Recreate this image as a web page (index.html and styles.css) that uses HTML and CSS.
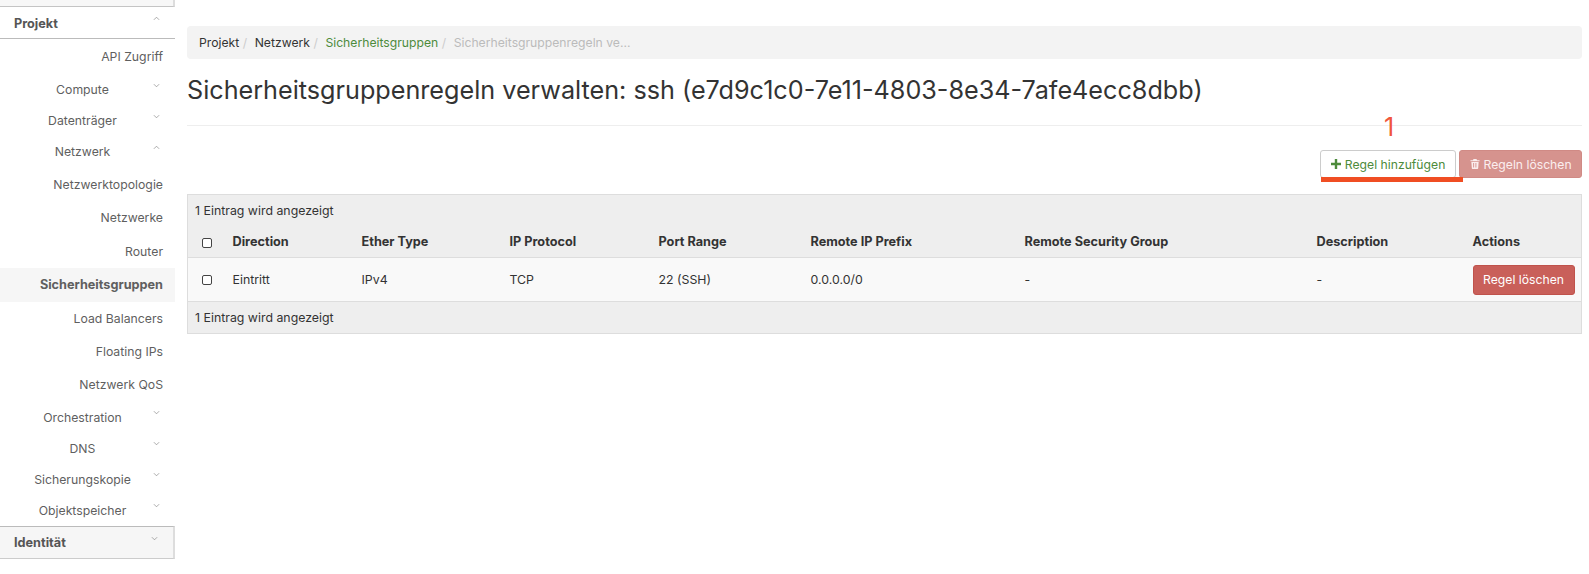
FILE: index.html
```html
<!DOCTYPE html>
<html lang="de">
  <head>
    <meta charset="UTF-8">
    <title>Sicherheitsgruppenregeln verwalten</title>
    <link rel="stylesheet" href="styles.css">
  </head>
  <body>
    <nav class="sidebar">
      <div class="sidebar-top"></div>
      <div class="nav-head open">
        <span>Projekt</span>
        <svg class="chevron" viewBox="0 0 8 5"><path d="M1 4l3-3 3 3"/></svg>
      </div>
      <a class="nav-leaf first">API Zugriff</a>
      <div class="nav-group"><span>Compute</span><svg class="chevron" viewBox="0 0 8 5"><path d="M1 1l3 3 3-3"/></svg></div>
      <div class="nav-group"><span>Datenträger</span><svg class="chevron" viewBox="0 0 8 5"><path d="M1 1l3 3 3-3"/></svg></div>
      <div class="nav-group"><span>Netzwerk</span><svg class="chevron" viewBox="0 0 8 5"><path d="M1 4l3-3 3 3"/></svg></div>
      <div class="nav-sub">
        <a class="nav-leaf">Netzwerktopologie</a>
        <a class="nav-leaf">Netzwerke</a>
        <a class="nav-leaf">Router</a>
        <a class="nav-leaf active">Sicherheitsgruppen</a>
        <a class="nav-leaf">Load Balancers</a>
        <a class="nav-leaf">Floating IPs</a>
        <a class="nav-leaf">Netzwerk QoS</a>
      </div>
      <div class="nav-group"><span>Orchestration</span><svg class="chevron" viewBox="0 0 8 5"><path d="M1 1l3 3 3-3"/></svg></div>
      <div class="nav-group"><span>DNS</span><svg class="chevron" viewBox="0 0 8 5"><path d="M1 1l3 3 3-3"/></svg></div>
      <div class="nav-group"><span>Sicherungskopie</span><svg class="chevron" viewBox="0 0 8 5"><path d="M1 1l3 3 3-3"/></svg></div>
      <div class="nav-group"><span>Objektspeicher</span><svg class="chevron" viewBox="0 0 8 5"><path d="M1 1l3 3 3-3"/></svg></div>
      <div class="nav-head closed">
        <span>Identität</span>
        <svg class="chevron" viewBox="0 0 8 5"><path d="M1 1l3 3 3-3"/></svg>
      </div>
    </nav>

    <main class="content">
      <ol class="breadcrumb">
        <li>Projekt</li>
        <li>Netzwerk</li>
        <li class="crumb-link">Sicherheitsgruppen</li>
        <li class="crumb-current">Sicherheitsgruppenregeln ve...</li>
      </ol>

      <h1>Sicherheitsgruppenregeln verwalten: ssh (e7d9c1c0-7e11-4803-8e34-7afe4ecc8dbb)</h1>

      <div class="actions">
        <span class="step-number">1</span>
        <button type="button" class="btn btn-add">
          <svg class="icon" viewBox="0 0 10 10"><path d="M3.800 0h2.400v3.800H10v2.400H6.200V10H3.800V6.200H0V3.800h3.800z"/></svg>
          Regel hinzufügen
        </button>
        <button type="button" class="btn btn-delete-all">
          <svg class="icon" viewBox="0 0 10 11"><path d="M3.400 0h3.200l.7 1.300H10v1.200H0V1.300h2.700zM1 3.200h8l-.5 7a.8.8 0 0 1-.8.8H2.300a.8.8 0 0 1-.8-.8zm2 1.200v5h1v-5zm2.500 0v5h1v-5z"/></svg>
          Regeln löschen
        </button>
        <span class="step-underline"></span>
      </div>

      <table class="rules">
        <colgroup>
          <col class="col-check">
          <col class="col-direction">
          <col class="col-ether">
          <col class="col-protocol">
          <col class="col-port">
          <col class="col-prefix">
          <col class="col-group">
          <col class="col-description">
          <col class="col-actions">
        </colgroup>
        <thead>
          <tr class="summary"><td colspan="9">1 Eintrag wird angezeigt</td></tr>
          <tr class="columns">
            <th><span class="checkbox head-check"></span></th>
            <th>Direction</th>
            <th>Ether Type</th>
            <th>IP Protocol</th>
            <th>Port Range</th>
            <th>Remote IP Prefix</th>
            <th>Remote Security Group</th>
            <th>Description</th>
            <th>Actions</th>
          </tr>
        </thead>
        <tbody>
          <tr class="row">
            <td><span class="checkbox"></span></td>
            <td>Eintritt</td>
            <td>IPv4</td>
            <td>TCP</td>
            <td>22 (SSH)</td>
            <td>0.0.0.0/0</td>
            <td>-</td>
            <td>-</td>
            <td><button type="button" class="btn btn-delete">Regel löschen</button></td>
          </tr>
        </tbody>
        <tfoot>
          <tr class="summary foot"><td colspan="9">1 Eintrag wird angezeigt</td></tr>
        </tfoot>
      </table>
    </main>
  </body>
</html>
```

FILE: styles.css
```css
* {
  box-sizing: border-box;
}

html,
body {
  height: 100%;
}

body {
  margin: 0;
  display: flex;
  overflow: hidden;
  background-color: #fff;
  color: #333;
  font-family: Inter, "Liberation Sans", sans-serif;
  font-size: 12.35px;
}

/* Sidebar */
.sidebar {
  flex: 0 0 175px;
  color: #5f5f5f;
  font-size: 12.25px;
}

.sidebar-top {
  height: 7px;
  background-color: #f7f7f7;
  border-right: 2px solid #ddd;
  border-bottom: 1px solid #c4c4c4;
}

.nav-head {
  display: flex;
  align-items: center;
  justify-content: space-between;
  padding: 0 14px;
  font-size: 12.7px;
  font-weight: 700;
  color: #555;
}

.nav-head.open {
  height: 32px;
  padding-top: 1px;
  border-bottom: 1px solid #bbb;
}

.nav-head.closed {
  height: 33px;
  padding-top: 1px;
  background-color: #f6f6f6;
  border-top: 1px solid #bbb;
  border-bottom: 1px solid #ccc;
  border-right: 2px solid #ddd;
}

.nav-leaf {
  display: block;
  height: 33.4px;
  line-height: 33.4px;
  padding-right: 12px;
  text-align: right;
}

.nav-leaf.first {
  height: 34px;
  margin-top: 1px;
}

.nav-leaf.active {
  background-color: #f6f6f6;
  font-size: 12.7px;
  font-weight: 700;
}

.nav-sub {
  padding-top: 1px;
}

.nav-group {
  display: flex;
  align-items: center;
  height: 31px;
}

.nav-group span {
  width: 165px;
  text-align: center;
}

.chevron {
  flex: none;
  width: 7px;
  height: 5px;
  margin-top: -9px;
  fill: none;
  stroke: #888;
  stroke-width: 0.8;
}

.nav-group .chevron {
  margin-left: -12px;
}

.nav-head .chevron {
  margin-right: 1px;
}

/* Main column */
.content {
  flex: 1;
  padding: 26px 8px 0 12px;
}

.breadcrumb {
  display: flex;
  height: 33px;
  margin: 0;
  padding: 0 12px;
  align-items: center;
  font-size: 12.2px;
  list-style: none;
  background-color: #f3f3f3;
  border-radius: 4px;
}

.breadcrumb li + li::before {
  content: "/";
  padding: 0 7.5px 0 3.5px;
  color: #ccc;
}

.crumb-link {
  color: #4d8b3c;
}

.crumb-current {
  color: #bbb;
}

h1 {
  height: 67px;
  margin: 0;
  padding-top: 17px;
  border-bottom: 1px solid #eee;
  color: #333;
  font-size: 25.2px;
  font-weight: 400;
  line-height: 29px;
  white-space: nowrap;
}

.actions {
  position: relative;
  display: flex;
  justify-content: flex-end;
  gap: 3px;
  padding-top: 24px;
  margin-bottom: 16px;
}

.btn {
  display: inline-flex;
  align-items: center;
  justify-content: center;
  height: 28px;
  padding: 0 8px;
  border: 1px solid transparent;
  border-radius: 3px;
  font-family: inherit;
  font-size: 12.2px;
  white-space: nowrap;
}

.icon {
  width: 10px;
  height: 10px;
  margin-right: 4px;
  fill: currentColor;
}

.btn-add {
  width: 136px;
  background-color: #fff;
  border-color: #ccc;
  color: #4d8b3c;
}

.btn-delete-all {
  width: 123px;
  background-color: #d6938e;
  border-color: #d08a85;
  color: #fbeeee;
}

.step-number {
  position: absolute;
  top: -13px;
  right: 188px;
  color: #f0563a;
  font-size: 25px;
  line-height: 29px;
}

.step-underline {
  position: absolute;
  top: 51px;
  right: 119px;
  width: 142px;
  height: 5px;
  background-color: #f04e23;
}

/* Table */
.rules {
  width: 100%;
  table-layout: fixed;
  border-collapse: collapse;
  border: 1px solid #ddd;
}

.col-check { width: 37px; }
.col-direction { width: 129px; }
.col-ether { width: 148px; }
.col-protocol { width: 149px; }
.col-port { width: 152px; }
.col-prefix { width: 214px; }
.col-group { width: 292px; }
.col-description { width: 156px; }
.col-actions { width: 117px; }

.summary td {
  height: 32px;
  padding: 0 7px;
  background-color: #eee;
}

.columns th {
  height: 31px;
  padding: 0 8px 1px;
  background-color: #eee;
  border-bottom: 1px solid #ddd;
  font-size: 12.7px;
  font-weight: 700;
  text-align: left;
}

.row td {
  height: 44px;
  padding: 0 8px;
  background-color: #f9f9f9;
}

.foot td {
  height: 32px;
  border-top: 1px solid #ddd;
}

.checkbox {
  display: block;
  width: 10px;
  height: 10px;
  margin-left: 6px;
  background-color: #fff;
  border: 1px solid #444;
  border-radius: 2px;
}

.head-check {
  margin-top: 4px;
}

.btn-delete {
  width: 102px;
  height: 30px;
  background-color: #c9605a;
  border-color: #c0534c;
  color: #fff;
}
```
